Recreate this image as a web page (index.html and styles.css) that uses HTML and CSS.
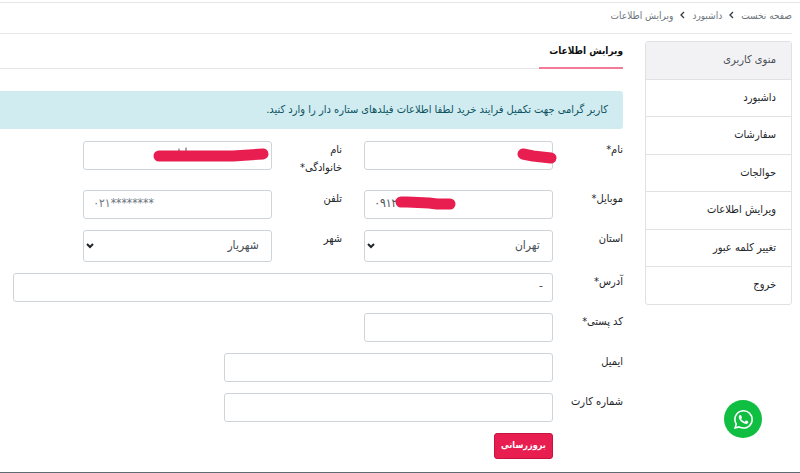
FILE: index.html
```html
<!DOCTYPE html>
<html lang="fa" dir="rtl">
<head>
  <meta charset="UTF-8">
  <meta name="viewport" content="width=device-width, initial-scale=1.0">
  <title>ویرایش اطلاعات</title>
  <link rel="stylesheet" href="styles.css">
</head>
<body>
  <nav class="breadcrumb">
    <a href="#">صفحه نخست</a>
    <svg class="crumb-arrow" viewBox="0 0 5 8"><path d="M4 1L1 4l3 3"/></svg>
    <a href="#">داشبورد</a>
    <svg class="crumb-arrow" viewBox="0 0 5 8"><path d="M4 1L1 4l3 3"/></svg>
    <span>ویرایش اطلاعات</span>
  </nav>

  <div class="page">
    <aside class="sidebar">
      <div class="sidebar-title">منوی کاربری</div>
      <a href="#">داشبورد</a>
      <a href="#">سفارشات</a>
      <a href="#">حوالجات</a>
      <a href="#">ویرایش اطلاعات</a>
      <a href="#">تغییر کلمه عبور</a>
      <a href="#">خروج</a>
    </aside>

    <main class="content">
      <div class="title-bar">
        <h1>ویرایش اطلاعات</h1>
      </div>
      <div class="alert">کاربر گرامی جهت تکمیل فرایند خرید لطفا اطلاعات فیلدهای ستاره دار را وارد کنید.</div>

      <form class="profile-form">
        <label for="name">نام*</label>
        <div class="field">
          <input type="text" id="name">
          <svg class="mark mark-name" viewBox="0 0 40 18"><path d="M6 7L16 9L34 11"/></svg>
        </div>
        <label for="family">نام<br>خانوادگی*</label>
        <div class="field">
          <input type="text" id="family">
          <svg class="mark mark-family" viewBox="0 0 116 16"><path class="ink" d="M26 2v3M33 1v4"/><path d="M6 9H80Q96 8 110 7"/></svg>
        </div>

        <label for="mobile" class="row-start">موبایل*</label>
        <div class="field">
          <input type="text" id="mobile" class="number" dir="ltr" value="۰۹۱۲">
          <svg class="mark mark-mobile" viewBox="0 0 62 18"><path d="M6 7H12L34 8L42 9H55"/></svg>
        </div>
        <label for="phone">تلفن</label>
        <div class="field">
          <input type="text" id="phone" class="number" dir="ltr" placeholder="۰۲۱********">
        </div>

        <label for="province" class="row-start">استان</label>
        <div class="field">
          <select id="province"><option>تهران</option></select>
          <svg class="select-arrow" viewBox="0 0 8 6"><path d="M1 1l3 3 3-3"/></svg>
        </div>
        <label for="city">شهر</label>
        <div class="field">
          <select id="city"><option>شهریار</option></select>
          <svg class="select-arrow" viewBox="0 0 8 6"><path d="M1 1l3 3 3-3"/></svg>
        </div>

        <label for="address" class="row-start">آدرس*</label>
        <div class="field field-full">
          <input type="text" id="address" value="-">
        </div>

        <label for="postal" class="row-start">کد پستی*</label>
        <div class="field">
          <input type="text" id="postal">
        </div>

        <label for="email" class="row-start">ایمیل</label>
        <div class="field field-medium">
          <input type="email" id="email">
        </div>

        <label for="card" class="row-start">شماره کارت</label>
        <div class="field field-medium">
          <input type="text" id="card">
        </div>

        <div class="field actions">
          <button type="submit">بروزرسانی</button>
        </div>
      </form>
    </main>
  </div>

  <a href="#" class="whatsapp" aria-label="WhatsApp">
    <svg viewBox="0 0 24 24"><path fill="#fff" d="M17.472 14.382c-.297-.149-1.758-.867-2.03-.967-.273-.099-.471-.148-.67.15-.197.297-.767.966-.94 1.164-.173.199-.347.223-.644.075-.297-.15-1.255-.463-2.39-1.475-.883-.788-1.48-1.761-1.653-2.059-.173-.297-.018-.458.13-.606.134-.133.298-.347.446-.52.149-.174.198-.298.298-.497.099-.198.05-.371-.025-.52-.075-.149-.669-1.612-.916-2.207-.242-.579-.487-.5-.669-.51-.173-.008-.371-.01-.57-.01-.198 0-.52.074-.792.372-.272.297-1.04 1.016-1.04 2.479 0 1.462 1.065 2.875 1.213 3.074.149.198 2.096 3.2 5.077 4.487.709.306 1.262.489 1.694.625.712.227 1.36.195 1.871.118.571-.085 1.758-.719 2.006-1.413.248-.694.248-1.289.173-1.413-.074-.124-.272-.198-.57-.347m-5.421 7.403h-.004a9.87 9.87 0 01-5.031-1.378l-.361-.214-3.741.982.998-3.648-.235-.374a9.86 9.86 0 01-1.51-5.26c.001-5.45 4.436-9.884 9.888-9.884 2.64 0 5.122 1.03 6.988 2.898a9.825 9.825 0 012.893 6.994c-.003 5.45-4.437 9.884-9.885 9.884m8.413-18.297A11.815 11.815 0 0012.05 0C5.495 0 .16 5.335.157 11.892c0 2.096.547 4.142 1.588 5.945L.057 24l6.305-1.654a11.882 11.882 0 005.683 1.448h.005c6.554 0 11.89-5.335 11.893-11.893a11.821 11.821 0 00-3.48-8.413z"/></svg>
  </a>
</body>
</html>
```
FILE: styles.css
```css
* {
  box-sizing: border-box;
}
body {
  margin: 2px 0 0;
  min-height: calc(100vh - 2px);
  font-family: "DejaVu Sans Condensed", "DejaVu Sans", sans-serif;
  font-size: 11px;
  line-height: 19px;
  color: #212529;
  background-color: #fff;
  border-top: 1px solid #e4e6e8;
  border-bottom: 1px solid #5f6b73;
}
a {
  color: inherit;
  text-decoration: none;
}
.breadcrumb {
  display: flex;
  align-items: center;
  gap: 7px;
  height: 31px;
  margin-right: 8px;
  padding-bottom: 6px;
  font-size: 10px;
  color: #6c757d;
  border-bottom: 1px solid #e4e6e8;
}
.crumb-arrow {
  width: 5px;
  height: 8px;
  fill: none;
  stroke: #343a40;
  stroke-width: 1.3;
}
.page {
  display: flex;
  gap: 22px;
  padding: 7px 8px 0 0;
  align-items: flex-start;
}
.sidebar {
  display: flex;
  flex: 0 0 147px;
  flex-direction: column;
  min-height: 264px;
  border: 1px solid #dfe1e3;
  border-radius: 3px;
}
.sidebar a,
.sidebar-title {
  flex: 1 0 auto;
  padding: 8px 15px;
  border-bottom: 1px solid #dfe1e3;
}
.sidebar a:last-child {
  border-bottom: none;
}
.sidebar-title {
  color: #495057;
  background-color: #f2f2f5;
}
.content {
  flex: 1;
  min-width: 0;
}
.title-bar {
  display: flex;
  border-bottom: 1px solid #e4e6e8;
}
h1 {
  margin: 0 0 -1px;
  padding: 0 0 7px 10px;
  font-size: 10px;
  line-height: 19px;
  color: #111;
  border-bottom: 2px solid #f27c98;
}
.alert {
  margin: 22px 0 12px;
  padding: 9px 15px;
  line-height: 20px;
  color: #0c5460;
  background-color: #d1ecf1;
  border-radius: 0 3px 3px 0;
}
.profile-form {
  display: grid;
  grid-template-columns: repeat(27, 1fr);
  row-gap: 11px;
  align-items: start;
  margin-right: -11px;
  padding-left: 2px;
}
.profile-form label {
  grid-column: span 3;
  padding-right: 11px;
  line-height: 18px;
}
.profile-form .row-start {
  grid-column: 1 / span 3;
}
/* two-line label sets the height of the first row */
.profile-form label[for="family"] {
  padding-bottom: 2px;
}
.field {
  position: relative;
  display: flex;
  grid-column: span 9;
  margin: 0 11px;
}
.field-full {
  grid-column: span 24;
}
.field-medium {
  grid-column: span 15;
}
.actions {
  grid-column: 4 / span 9;
}
input,
select {
  width: 100%;
  height: 29px;
  padding: 0 9px 3px;
  font-family: inherit;
  font-size: 12px;
  color: #495057;
  background-color: #fff;
  border: 1px solid #ced4da;
  border-radius: 3px;
}
input::placeholder {
  color: #6c757d;
  opacity: 1;
}
.number {
  text-align: left;
}
select {
  height: 32px;
  padding: 0 12px 2px;
  appearance: none;
}
.select-arrow {
  position: absolute;
  left: 3px;
  top: 13px;
  width: 8px;
  height: 6px;
  fill: none;
  stroke: #212529;
  stroke-width: 2;
  pointer-events: none;
}
.mark {
  position: absolute;
  fill: none;
  stroke: #e91e50;
  stroke-width: 11;
  stroke-linecap: round;
  stroke-linejoin: round;
  pointer-events: none;
}
.mark .ink {
  stroke: #495057;
  stroke-width: 1;
}
.mark-name {
  right: -4px;
  top: 6px;
  width: 40px;
}
.mark-family {
  right: 3px;
  top: 6px;
  width: 116px;
}
.mark-mobile {
  left: 31px;
  top: 5px;
  width: 62px;
}
button {
  height: 26px;
  padding: 0 6px 2px;
  font-family: inherit;
  font-size: 9px;
  font-weight: bold;
  color: #fff;
  background-color: #e91e50;
  border: 1px solid #c4143f;
  border-radius: 3px;
  cursor: pointer;
}
.whatsapp {
  position: fixed;
  right: 38px;
  bottom: 35px;
  display: flex;
  align-items: center;
  justify-content: center;
  width: 38px;
  height: 38px;
  background-color: #10bf42;
  border-radius: 50%;
}
.whatsapp svg {
  width: 19px;
  height: 19px;
}
```
